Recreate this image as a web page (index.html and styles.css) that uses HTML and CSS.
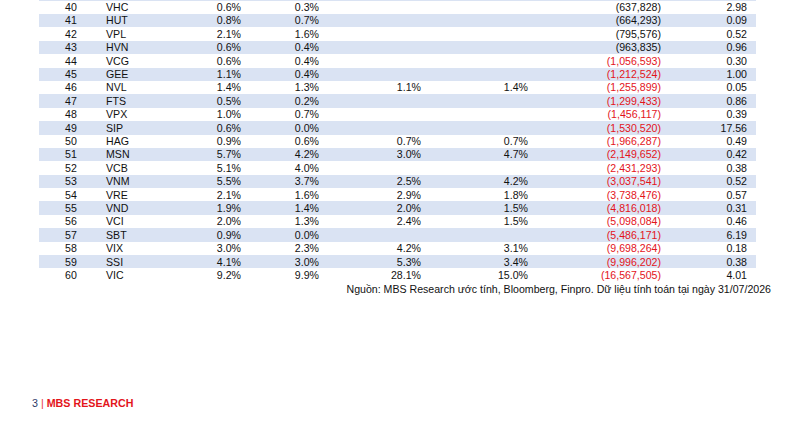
FILE: index.html
```html
<!DOCTYPE html>
<html lang="vi">
<head>
<meta charset="utf-8">
<link rel="stylesheet" href="styles.css">
</head>
<body>
<div class="page">
  <div class="tbl">
    <div class="strip"></div>
    <div class="row"><span class="c1">40</span><span class="c2">VHC</span><span class="c3">0.6%</span><span class="c4">0.3%</span><span class="c5"></span><span class="c6"></span><span class="c7">(637,828)</span><span class="c8">2.98</span></div>
    <div class="row alt"><span class="c1">41</span><span class="c2">HUT</span><span class="c3">0.8%</span><span class="c4">0.7%</span><span class="c5"></span><span class="c6"></span><span class="c7">(664,293)</span><span class="c8">0.09</span></div>
    <div class="row"><span class="c1">42</span><span class="c2">VPL</span><span class="c3">2.1%</span><span class="c4">1.6%</span><span class="c5"></span><span class="c6"></span><span class="c7">(795,576)</span><span class="c8">0.52</span></div>
    <div class="row alt"><span class="c1">43</span><span class="c2">HVN</span><span class="c3">0.6%</span><span class="c4">0.4%</span><span class="c5"></span><span class="c6"></span><span class="c7">(963,835)</span><span class="c8">0.96</span></div>
    <div class="row"><span class="c1">44</span><span class="c2">VCG</span><span class="c3">0.6%</span><span class="c4">0.4%</span><span class="c5"></span><span class="c6"></span><span class="c7 neg">(1,056,593)</span><span class="c8">0.30</span></div>
    <div class="row alt"><span class="c1">45</span><span class="c2">GEE</span><span class="c3">1.1%</span><span class="c4">0.4%</span><span class="c5"></span><span class="c6"></span><span class="c7 neg">(1,212,524)</span><span class="c8">1.00</span></div>
    <div class="row"><span class="c1">46</span><span class="c2">NVL</span><span class="c3">1.4%</span><span class="c4">1.3%</span><span class="c5">1.1%</span><span class="c6">1.4%</span><span class="c7 neg">(1,255,899)</span><span class="c8">0.05</span></div>
    <div class="row alt"><span class="c1">47</span><span class="c2">FTS</span><span class="c3">0.5%</span><span class="c4">0.2%</span><span class="c5"></span><span class="c6"></span><span class="c7 neg">(1,299,433)</span><span class="c8">0.86</span></div>
    <div class="row"><span class="c1">48</span><span class="c2">VPX</span><span class="c3">1.0%</span><span class="c4">0.7%</span><span class="c5"></span><span class="c6"></span><span class="c7 neg">(1,456,117)</span><span class="c8">0.39</span></div>
    <div class="row alt"><span class="c1">49</span><span class="c2">SIP</span><span class="c3">0.6%</span><span class="c4">0.0%</span><span class="c5"></span><span class="c6"></span><span class="c7 neg">(1,530,520)</span><span class="c8">17.56</span></div>
    <div class="row"><span class="c1">50</span><span class="c2">HAG</span><span class="c3">0.9%</span><span class="c4">0.6%</span><span class="c5">0.7%</span><span class="c6">0.7%</span><span class="c7 neg">(1,966,287)</span><span class="c8">0.49</span></div>
    <div class="row alt"><span class="c1">51</span><span class="c2">MSN</span><span class="c3">5.7%</span><span class="c4">4.2%</span><span class="c5">3.0%</span><span class="c6">4.7%</span><span class="c7 neg">(2,149,652)</span><span class="c8">0.42</span></div>
    <div class="row"><span class="c1">52</span><span class="c2">VCB</span><span class="c3">5.1%</span><span class="c4">4.0%</span><span class="c5"></span><span class="c6"></span><span class="c7 neg">(2,431,293)</span><span class="c8">0.38</span></div>
    <div class="row alt"><span class="c1">53</span><span class="c2">VNM</span><span class="c3">5.5%</span><span class="c4">3.7%</span><span class="c5">2.5%</span><span class="c6">4.2%</span><span class="c7 neg">(3,037,541)</span><span class="c8">0.52</span></div>
    <div class="row"><span class="c1">54</span><span class="c2">VRE</span><span class="c3">2.1%</span><span class="c4">1.6%</span><span class="c5">2.9%</span><span class="c6">1.8%</span><span class="c7 neg">(3,738,476)</span><span class="c8">0.57</span></div>
    <div class="row alt"><span class="c1">55</span><span class="c2">VND</span><span class="c3">1.9%</span><span class="c4">1.4%</span><span class="c5">2.0%</span><span class="c6">1.5%</span><span class="c7 neg">(4,816,018)</span><span class="c8">0.31</span></div>
    <div class="row"><span class="c1">56</span><span class="c2">VCI</span><span class="c3">2.0%</span><span class="c4">1.3%</span><span class="c5">2.4%</span><span class="c6">1.5%</span><span class="c7 neg">(5,098,084)</span><span class="c8">0.46</span></div>
    <div class="row alt"><span class="c1">57</span><span class="c2">SBT</span><span class="c3">0.9%</span><span class="c4">0.0%</span><span class="c5"></span><span class="c6"></span><span class="c7 neg">(5,486,171)</span><span class="c8">6.19</span></div>
    <div class="row"><span class="c1">58</span><span class="c2">VIX</span><span class="c3">3.0%</span><span class="c4">2.3%</span><span class="c5">4.2%</span><span class="c6">3.1%</span><span class="c7 neg">(9,698,264)</span><span class="c8">0.18</span></div>
    <div class="row alt"><span class="c1">59</span><span class="c2">SSI</span><span class="c3">4.1%</span><span class="c4">3.0%</span><span class="c5">5.3%</span><span class="c6">3.4%</span><span class="c7 neg">(9,996,202)</span><span class="c8">0.38</span></div>
    <div class="row"><span class="c1">60</span><span class="c2">VIC</span><span class="c3">9.2%</span><span class="c4">9.9%</span><span class="c5">28.1%</span><span class="c6">15.0%</span><span class="c7 neg">(16,567,505)</span><span class="c8">4.01</span></div>
  </div>
  <div class="source">Nguồn: MBS Research ước tính, Bloomberg, Finpro. Dữ liệu tính toán tại ngày 31/07/2026</div>
  <div class="footer"><span class="pg">3</span> <span class="bar">|</span> <span class="brand">MBS RESEARCH</span></div>
</div>
</body>
</html>
```

FILE: styles.css
```css
html, body {
  margin: 0;
  padding: 0;
  background: #ffffff;
}
.page {
  width: 790px;
  font-family: "Liberation Sans", Arial, sans-serif;
  font-size: 10.6px;
  color: #111111;
}
.tbl {
  margin-left: 39px;
  width: 717px;
}
.strip {
  height: 0.6px;
  background: #dae3f3;
}
.row {
  display: grid;
  grid-template-columns: 64px 77px 64px 78px 102px 107px 133px 92px;
  height: 13.4px;
  box-sizing: border-box;
  padding-top: 1.5px;
  line-height: 11.9px;
  white-space: nowrap;
}
.alt {
  background: #dae3f3;
}
.c1 { text-align: center; }
.c2 { text-align: left; padding-left: 3px; }
.c3, .c4, .c5, .c6, .c7 { text-align: right; padding-right: 3px; }
.c8 { text-align: right; padding-right: 9px; }
.neg { color: #e3141b; }
.source {
  width: 771px;
  text-align: right;
  margin-top: 1.6px;
  line-height: 13.4px;
  white-space: nowrap;
}
.footer {
  margin-top: 100px;
  padding-left: 32px;
  font-size: 10.7px;
  line-height: 12px;
}
.pg { color: #2b3a67; }
.bar { color: #e8343a; }
.brand { color: #e3141b; font-weight: bold; }
```
